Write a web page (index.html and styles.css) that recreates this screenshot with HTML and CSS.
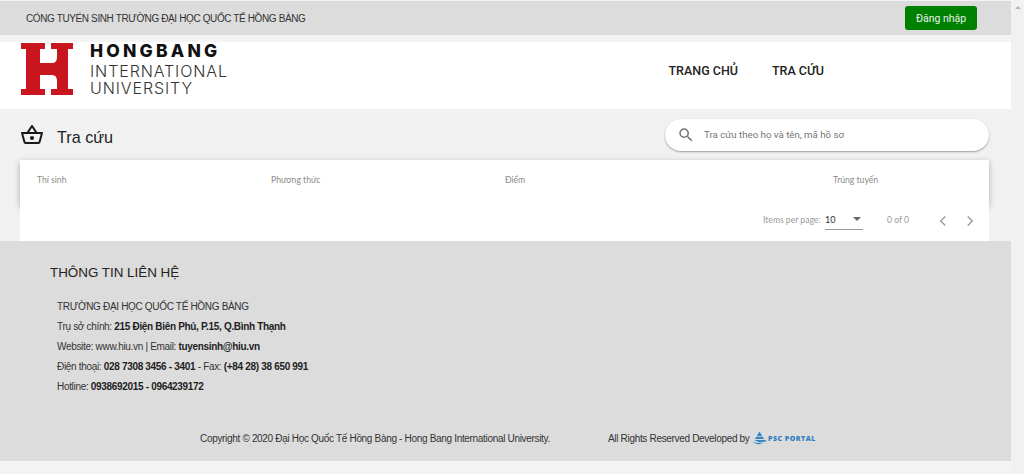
FILE: index.html
```html
<!DOCTYPE html>
<html lang="vi">
<head>
<meta charset="utf-8">
<title>Tra cứu</title>
<link rel="stylesheet" href="styles.css">
</head>
<body>
<div class="page">
  <div class="main">
    <div class="topbar">
      <span class="topbar-title">CỔNG TUYỂN SINH TRƯỜNG ĐẠI HỌC QUỐC TẾ HỒNG BÀNG</span>
      <button class="login">Đăng nhập</button>
    </div>
    <header class="header">
      <div class="logo">
        <svg class="logo-mark" viewBox="0 0 52 52" width="52" height="52"><path fill="#c9151e" d="M0 0H24V6H19V20H31Q36 20 36 14V6H30V0H52V6H47V46H52V52H30V46H36V38Q36 32 31 32H19V46H24V52H0V46H5V6H0Z"/></svg>
        <div class="logo-text">
          <div class="logo-name">HONGBANG</div>
          <div class="logo-sub">INTERNATIONAL</div>
          <div class="logo-sub">UNIVERSITY</div>
        </div>
      </div>
      <nav class="nav">
        <a>TRANG CHỦ</a>
        <a>TRA CỨU</a>
      </nav>
    </header>
    <section class="content">
      <div class="title-row">
        <div class="title">
          <svg class="basket" viewBox="0 0 24 24" width="24" height="24"><path fill="#1a1a1a" d="M22 9h-4.790l-4.380-6.560c-.19-.28-.51-.42-.83-.42s-.64.14-.83.43L6.790 9H2c-.55 0-1 .45-1 1 0 .09.01.18.04.27l2.540 9.270c.23.84 1 1.460 1.920 1.460h13c.92 0 1.690-.62 1.930-1.460l2.540-9.270L23 10c0-.55-.45-1-1-1zM12 4.800L14.800 9H9.200L12 4.800zM18.500 19l-12.990.01L3.310 11H20.700l-2.200 8zM12 13c-1.100 0-2 .9-2 2s.9 2 2 2 2-.9 2-2-.9-2-2-2z"/></svg>
          <h1>Tra cứu</h1>
        </div>
        <div class="search">
          <svg viewBox="0 0 24 24" width="18" height="18"><path fill="#757575" d="M15.500 14h-.79l-.28-.27A6.470 6.470 0 0 0 16 9.500 6.500 6.500 0 1 0 9.500 16c1.610 0 3.090-.59 4.230-1.570l.27.28v.79l5 4.990L20.490 19l-4.990-5zm-6 0C7.010 14 5 11.990 5 9.500S7.010 5 9.500 5 14 7.010 14 9.500 11.990 14 9.500 14z"/></svg>
          <span>Tra cứu theo họ và tên, mã hồ sơ</span>
        </div>
      </div>
      <div class="card">
        <div class="table-head">
          <span>Thí sinh</span>
          <span>Phương thức</span>
          <span>Điểm</span>
          <span>Trúng tuyến</span>
        </div>
        <div class="paginator">
          <span class="per-page">Items per page:</span>
          <div class="select"><span>10</span><i class="caret"></i></div>
          <span class="range">0 of 0</span>
          <svg class="chev" viewBox="0 0 24 24" width="18" height="18"><path fill="none" stroke="#9e9e9e" stroke-width="2" d="M15 6l-6 6 6 6"/></svg>
          <svg class="chev" viewBox="0 0 24 24" width="18" height="18"><path fill="none" stroke="#9e9e9e" stroke-width="2" d="M9 6l6 6-6 6"/></svg>
        </div>
      </div>
    </section>
    <footer class="footer">
      <h2>THÔNG TIN LIÊN HỆ</h2>
      <div class="contact">
        <p>TRƯỜNG ĐẠI HỌC QUỐC TẾ HỒNG BÀNG</p>
        <p>Trụ sở chính: <b>215 Điện Biên Phủ, P.15, Q.Bình Thạnh</b></p>
        <p>Website: www.hiu.vn | Email: <b>tuyensinh@hiu.vn</b></p>
        <p>Điện thoại: <b>028 7308 3456 - 3401</b> - Fax: <b>(+84 28) 38 650 991</b></p>
        <p>Hotline: <b>0938692015 - 0964239172</b></p>
      </div>
      <div class="copyright">
        <span class="copy">Copyright © 2020 Đại Học Quốc Tế Hồng Bàng - Hong Bang International University.</span>
        <span class="rights">All Rights Reserved Developed by</span>
        <span class="psc">
          <svg viewBox="0 0 16 14" width="15" height="14"><path fill="#2f86c6" d="M8 0l3 5H5zM4.500 6h7l1.500 2H3zM2 9h12l2 1.500-8 1zM0 11.500l8 .8 5-.6L7 14z"/></svg>
          <span>PSC PORTAL</span>
        </span>
      </div>
    </footer>
  </div>
  <div class="scrollbar"><i class="scroll-up"></i></div>
</div>
</body>
</html>
```
FILE: styles.css
```css
* { box-sizing: border-box; }
html, body { margin: 0; height: 100%; overflow: hidden; }
body { background: #f4f4f4; font-family: "Liberation Sans", Arial, sans-serif; color: #222; }
.page { display: flex; height: 474px; }
.main { width: 1011px; padding-top: 1px; display: flex; flex-direction: column; }
.scrollbar { width: 13px; background: #f1f1f1; padding: 6px 3px 0; }
.scroll-up { display: block; width: 0; height: 0; margin: 0 auto; border: 3px solid transparent; border-top: 0; border-bottom: 3px solid #b5b5b5; }

.topbar { height: 34px; background: #dcdcdc; display: flex; align-items: center; justify-content: space-between; padding: 0 34px 0 26px; }
.topbar-title { font-size: 10px; letter-spacing: -.38px; color: #333; }
.login { width: 72px; height: 24px; background: #008000; border: 0; border-radius: 3px; color: #e8f2e8; font: 400 10.5px Roboto, sans-serif; padding: 0; }

.header { margin-top: 7px; height: 67px; background: #fff; display: flex; align-items: flex-start; padding-left: 21px; }
.logo { display: flex; gap: 17px; align-items: flex-start; }
.logo-mark { display: block; margin-top: 1px; }
.logo-text { display: flex; flex-direction: column; font-family: Inter, sans-serif; }
.logo-name { font-size: 17.5px; font-weight: 800; line-height: 18px; letter-spacing: 3.2px; color: #111; margin-bottom: 3px; }
.logo-sub { font-size: 16px; font-weight: 300; line-height: 17px; letter-spacing: .9px; color: #333; }
.nav { display: flex; gap: 34px; margin-left: auto; margin-right: 187px; margin-top: 21px; }
.nav a { font: 500 12.5px Roboto, sans-serif; color: #222; }

.content { background: #f1f1f1; height: 132px; padding: 10px 22px 0 20px; display: flex; flex-direction: column; }
.title-row { display: flex; justify-content: space-between; height: 41px; }
.title { display: flex; align-items: center; gap: 13px; height: 32px; }
.title h1 { margin: 0; font: 400 16.2px "Liberation Sans", Arial, sans-serif; color: #222; position: relative; top: 2px; }
.search { width: 324px; height: 32px; background: #fff; border-radius: 16px; box-shadow: 0 1px 2px rgba(0,0,0,.35); display: flex; align-items: center; gap: 9px; padding-left: 12px; font: 400 9.7px Roboto, sans-serif; color: #757575; }
.search span { position: relative; top: -1px; }

.card { background: #fff; flex: 1; }
.table-head { height: 45px; display: grid; grid-template-columns: 234px 234px 328px 1fr; padding: 0 0 6px 17px; align-items: center; font: 400 8.6px Lato, sans-serif; color: #8a8a8a; box-shadow: 0 2px 6px rgba(0,0,0,.28); background: #fff; }
.paginator { position: relative; height: 36px; background: #fff; display: flex; align-items: center; padding: 0 0 6px 743px; font: 400 8.6px Lato, sans-serif; color: #9a9a9a; }
.per-page { width: 62px; }
.select { width: 38px; height: 16px; border-bottom: 1px solid #9a9a9a; display: flex; justify-content: space-between; align-items: flex-start; color: #333; font-size: 9px; padding-right: 2px; position: relative; top: 2px; }
.caret { width: 0; height: 0; margin-top: 3px; border: 4px solid transparent; border-top: 4px solid #666; border-bottom: 0; }
.range { margin-left: 24px; width: 47px; }
.chev { margin-right: 9px; position: relative; top: 1px; }

.footer { background: #dcdcdc; height: 220px; padding: 24px 0 0; display: flex; flex-direction: column; }
.footer h2 { margin: 0 0 0 50px; font: 400 13.4px/15px "Liberation Sans", Arial, sans-serif; color: #222; }
.contact { margin: 19px 0 0 57px; font-size: 10px; letter-spacing: -.32px; color: #333; }
.contact p { margin: 0; height: 20px; line-height: 16px; }
.contact b { color: #1e1e1e; }
.copyright { display: flex; align-items: center; margin-top: 32px; padding-left: 200px; font-size: 10px; letter-spacing: -.32px; color: #333; }
.copy { width: 408px; flex: none; }
.rights { width: 144px; flex: none; white-space: nowrap; }
.psc { display: flex; align-items: center; gap: 1px; color: #2f7fbf; font: 800 7px "Open Sans", sans-serif; letter-spacing: .5px; white-space: nowrap; }
```
